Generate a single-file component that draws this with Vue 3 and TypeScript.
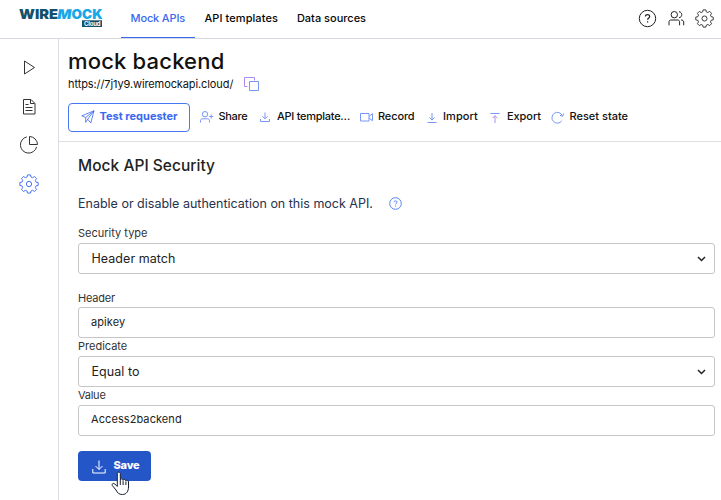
<script setup lang="ts">
import { ref } from 'vue'

interface Action {
  name: string
  label: string
  tracking: number
}

const actions: Action[] = [
  { name: 'share', label: 'Share', tracking: -0.3 },
  { name: 'template', label: 'API template…', tracking: -0.27 },
  { name: 'record', label: 'Record', tracking: -0.13 },
  { name: 'import', label: 'Import', tracking: 0.08 },
  { name: 'export', label: 'Export', tracking: -0.07 },
  { name: 'reset', label: 'Reset state', tracking: 0 },
]

const header = ref('apikey')
const value = ref('Access2backend')
const gear =
  'M8.4 1.2h3.2l.5 2.3c.7.2 1.3.4 1.8.8l2.1-1.3 2.2 2.2-1.300 2.100c.4.600.6 1.200.8 1.800l2.400.500v3.200l-2.400.500c-.2.700-.4 1.200-.8 1.800l1.300 2.100-2.200 2.200-2.100-1.300c-.6.400-1.100.6-1.800.8l-.5 2.300H8.400l-.5-2.300c-.7-.2-1.200-.4-1.800-.8L4 19.400l-2.200-2.200 1.300-2.100c-.4-.6-.6-1.100-.8-1.800l-2.400-.5V9.600l2.400-.5c.2-.6.4-1.200.8-1.800L1.800 5.200 4 3l2.100 1.300c.6-.4 1.100-.6 1.800-.8z'
</script>

<template>
  <div class="app">
    <header class="topbar">
      <svg class="logo" width="88" height="28" viewBox="0 -5 88 28">
        <text class="word dark" x="0" y="11" textLength="39" lengthAdjust="spacingAndGlyphs">WIRE</text>
        <text class="word light" x="0" y="11" textLength="14" lengthAdjust="spacingAndGlyphs" transform="translate(39.5 0) skewX(-9)">M</text>
        <text class="word light" x="52.5" y="11" textLength="31" lengthAdjust="spacingAndGlyphs">OCK</text>
        <rect x="63" y="12.3" width="20" height="6.7" fill="#12506b" />
        <text class="cloud" x="65" y="18" textLength="16.5">Cloud</text>
      </svg>
      <nav class="tabs">
        <a class="tab active">Mock APIs</a>
        <a class="tab templates">API templates</a>
        <a class="tab">Data sources</a>
      </nav>
      <div class="tools">
        <svg width="19" height="19" viewBox="0 0 19 19">
          <circle cx="9.5" cy="9.5" r="8.2" />
          <path d="M7.4 7.6c0-2.8 4.3-2.6 4.3-.1 0 1.5-2.1 1.6-2.1 3.3M9.6 12.3v1.2" stroke-width="1.2" />
        </svg>
        <svg width="17" height="17" viewBox="0 0 17 17">
          <circle cx="6.3" cy="4.7" r="3.2" />
          <path d="M1 15.3v-3.5c0-1.1.8-1.8 1.8-1.8h7c1 0 1.8.7 1.8 1.8v3.5M11 1.7c3.7.3 3.7 5.7 0 6M13 10c1.8 0 2.7.7 2.7 2v3.3" />
        </svg>
        <svg width="19" height="19" viewBox="-1 .2 22 22">
          <path :d="gear" stroke-linejoin="round" /><circle cx="10" cy="11.2" r="2.9" />
        </svg>
      </div>
    </header>

    <div class="body">
      <aside class="side">
        <svg width="20" height="20" viewBox="0 0 20 20"><path d="M5.500 3v13l10-6.500z" /></svg>
        <svg width="20" height="20" viewBox="0 0 20 20">
          <path d="M4.500 2.500h7.500l4 4v10.500H4.500zM11.500 2.500v4h4M6.500 7.500h3M6.500 10.500h7M6.500 13.500h7" />
        </svg>
        <svg width="20" height="20" viewBox="0 0 20 20">
          <path d="M7.8 1.9a8.2 8.2 0 1 0 9.8 9.9M10.500 1.500v8h8A8.200 8.200 0 0 0 10.500 1.500z" />
        </svg>
        <svg class="current" width="20" height="20" viewBox="-1 .2 22 22">
          <path :d="gear" stroke-linejoin="round" /><circle cx="10" cy="11.2" r="2.9" />
        </svg>
      </aside>

      <main class="main">
        <section class="heading">
          <h1>mock backend</h1>
          <div class="url">
            <span>https://7j1y9.wiremockapi.cloud/</span>
            <svg width="16" height="16" viewBox="0 0 16 16">
              <path d="M3.500 10.500h-3V1.500h10v3" stroke="#a98cf5" /><path d="M5.500 5.500h9v9h-9z" />
            </svg>
          </div>
          <div class="toolbar">
            <button class="requester" type="button">
              <svg width="14" height="14" viewBox="0 0 14 14">
                <path d="M.8 5.8 13 .8 9.8 13 6.700 9.200 13 .8 4.700 7.500zM4.700 7.500v4.800l2-3.100" stroke-linejoin="round" />
              </svg>
              <span>Test requester</span>
            </button>
            <div class="actions">
              <div v-for="a in actions" :key="a.name" class="action" :class="a.name">
                <svg width="14" height="14" viewBox="0 0 14 14">
                  <g v-if="a.name === 'share'">
                    <circle cx="5" cy="4.2" r="2.7" />
                    <path d="M.5 12.500v-1.800c0-1.200.7-1.900 1.900-1.900h5.200c1.200 0 1.900.7 1.900 1.900v1.800M11.200 4.500v4M9.200 6.500h4" />
                  </g>
                  <path v-else-if="a.name === 'template'" d="M5 2.500v6M2.500 6.300 5 8.800l2.500-2.500M.5 9v2.500h9V9" />
                  <path v-else-if="a.name === 'record'" d="M.5 3.500h8.500v7.500H.5zM9.200 6.300l3.300-2.600v7L9.200 8.200" />
                  <path v-else-if="a.name === 'import'" d="M5 3v7M2.500 7.500 5 10l2.500-2.500M.5 12.500h9" />
                  <g v-else-if="a.name === 'export'">
                    <path d="M.5 3.500h9" /><path d="M5 13V5.700M2.500 8.200 5 5.700l2.500 2.500" stroke="#a98cf5" />
                  </g>
                  <path v-else d="M10.800 10.800A5.400 5.400 0 1 1 11.300 5.600M9 5.300l2.700 1 1-2.800" />
                </svg>
                <span :style="{ letterSpacing: a.tracking + 'px' }">{{ a.label }}</span>
              </div>
            </div>
          </div>
        </section>

        <form class="security" @submit.prevent>
          <h2>Mock API Security</h2>
          <p class="intro">
            <span>Enable or disable authentication on this mock API.</span>
            <svg width="13" height="13" viewBox="0 0 13 13">
              <circle cx="6.5" cy="6.5" r="5.8" />
              <path d="M5.100 5.300c0-2 2.900-1.800 2.900-.1 0 1.100-1.400 1.100-1.400 2.200M6.600 8.500v1" />
            </svg>
          </p>

          <label class="type">Security type</label>
          <div class="field select">
            Header match
            <svg width="9" height="6" viewBox="0 0 9 6"><path d="M1 1l3.500 3.500L8 1" /></svg>
          </div>
          <label class="first">Header</label>
          <input v-model="header" class="field" type="text" />
          <label>Predicate</label>
          <div class="field select">
            Equal to
            <svg width="9" height="6" viewBox="0 0 9 6"><path d="M1 1l3.500 3.500L8 1" /></svg>
          </div>
          <label class="narrow">Value</label>
          <input v-model="value" class="field raised" type="text" />

          <button class="save" type="submit">
            <svg width="14" height="14" viewBox="0 0 14 14">
              <path d="M7 .5v8.800M3.500 6 7 9.500 10.500 6M.8 9v4h12.400V9" />
            </svg>
            <span>Save</span>
            <svg class="pointer" width="20" height="25" viewBox="0 0 20 25">
              <path d="M6.300 15.500V2.800c0-2.200 3-2.200 3 0v6c.3-1.400 2.600-1.200 2.800.4.5-1.200 2.600-.9 2.800.6.6-1 2.600-.6 2.600 1.200v5c0 4-2 7.500-6 7.500-3.500 0-5-1.500-6.500-4.500L1.300 14.500c-.8-1.800 1.200-2.900 2.500-1.500zM9.300 9v5M12.100 9.500v4.500M14.900 10.500V14" />
            </svg>
          </button>
        </form>
      </main>
    </div>
  </div>
</template>

<style>
body {
  margin: 0;
  background: #fff;
  overflow: hidden;
}
</style>

<style scoped>
.app {
  box-sizing: border-box;
  width: 721px;
  height: 500px;
  display: flex;
  flex-direction: column;
  overflow: hidden;
  color: #111;
  font: 400 11px/16px Inter, "Open Sans", sans-serif;
}
.app * {
  box-sizing: border-box;
}
svg {
  display: block;
  flex: none;
  fill: none;
  stroke: currentColor;
  stroke-width: 1;
}
.topbar {
  height: 39px;
  flex: none;
  display: flex;
  border-bottom: 1px solid #d8d8df;
  padding-left: 19px;
}
.logo {
  margin-top: 3px;
  stroke: none;
  overflow: visible;
}
.word {
  font: 900 13.5px Inter, sans-serif;
}
.dark {
  fill: #12506b;
}
.light {
  fill: #18a8e8;
}
.cloud {
  font: 700 6px Inter, sans-serif;
  fill: #fff;
}
.tabs {
  display: flex;
  margin-left: 14px;
  gap: 19px;
  font-weight: 500;
  line-height: 36px;
  white-space: nowrap;
}
.tab {
  height: 38px;
  color: #080808;
}
.tab.active {
  width: 74px;
  margin-right: -9.5px;
  padding-left: 9.5px;
  color: #3a68ef;
  letter-spacing: -0.15px;
  border-bottom: 1px solid #3a68ef;
}
.tab.templates {
  letter-spacing: 0.07px;
}
.tools {
  display: flex;
  align-items: center;
  gap: 10.5px;
  margin: 0 7px 2px auto;
  color: #222;
}
.body {
  flex: 1;
  display: flex;
  min-height: 0;
}
.side {
  width: 59px;
  flex: none;
  display: flex;
  flex-direction: column;
  align-items: center;
  gap: 18.5px;
  padding-top: 19px;
  border-right: 1px solid #dcdce2;
  color: #333;
}
.current {
  color: #3a68ef;
}
.main {
  flex: 1;
  min-width: 0;
}
.heading {
  height: 103px;
  padding: 8px 0 0 9px;
  border-bottom: 1px solid #dedee3;
}
h1 {
  margin: 0;
  font-size: 22px;
  line-height: 28px;
  font-weight: 500;
  letter-spacing: 0.18px;
}
.url {
  display: flex;
  align-items: center;
  height: 16px;
  gap: 11px;
  margin-top: 1px;
  letter-spacing: -0.1px;
}
.url svg {
  color: #7697f5;
}
.toolbar {
  display: flex;
  align-items: center;
  margin-top: 11px;
}
.requester {
  width: 122px;
  height: 29px;
  flex: none;
  display: flex;
  align-items: center;
  gap: 4.5px;
  padding: 0 0 2px 12px;
  border: 1px solid #4977f1;
  border-radius: 4px;
  background: #fff;
  color: #3a68ef;
  font: 700 11px/16px Inter, sans-serif;
  white-space: nowrap;
}
.requester svg {
  stroke-width: 0.8;
}
.requester span,
.action span {
  padding-bottom: 2px;
}
.actions {
  display: grid;
  grid-template-columns: 60px 100px 67px 63px 61px auto;
  margin: 0 0 2px 10px;
}
.action {
  display: flex;
  align-items: center;
  gap: 4.5px;
  white-space: nowrap;
  font-weight: 500;
}
.action svg {
  color: #7697f5;
}
.action.template {
  gap: 3px;
}
.action.record {
  gap: 4px;
}
.action.import {
  gap: 2px;
}
.action.export {
  gap: 3px;
}
.security {
  display: flex;
  flex-direction: column;
  align-items: stretch;
  padding: 14px 6px 0 19px;
}
h2 {
  margin: 0;
  font-size: 15.5px;
  line-height: 20px;
  font-weight: 500;
  letter-spacing: 0.03px;
  color: #222;
}
.intro {
  display: flex;
  align-items: center;
  gap: 16px;
  height: 20px;
  margin: 17px 0 0;
  color: #26324c;
  font-size: 12.5px;
}
.intro span {
  padding-top: 2px;
}
.intro svg {
  color: #5583f3;
}
label {
  height: 18px;
  line-height: 17px;
  color: #333;
}
.type {
  margin-top: 12px;
}
.first {
  margin-top: 15px;
  line-height: 19px;
  letter-spacing: -0.19px;
}
.narrow {
  letter-spacing: -0.25px;
}
.field {
  width: 100%;
  height: 31px;
  display: flex;
  align-items: center;
  padding: 0 12px 1px;
  border: 1px solid #c6c6c6;
  border-radius: 3px;
  background: #fff;
  color: #222;
  font: 400 11px/16px Inter, sans-serif;
  letter-spacing: 0.08px;
  outline: none;
}
.raised {
  padding-bottom: 3px;
}
.select {
  justify-content: space-between;
  padding: 0 8px 0 12.5px;
  font-size: 12.5px;
  letter-spacing: 0.05px;
}
.select svg {
  stroke-width: 1.5;
}
.save {
  position: relative;
  width: 73px;
  height: 30px;
  display: flex;
  align-items: center;
  gap: 7.5px;
  margin-top: 15px;
  padding: 0 0 0 14px;
  border: 0;
  border-radius: 4px;
  background: #2456c7;
  color: #fff;
  font: 800 11px/16px Inter, sans-serif;
  letter-spacing: -0.2px;
}
.save > svg:first-child {
  margin-top: 2px;
}
.save span {
  margin-top: -2px;
}
.pointer {
  position: absolute;
  left: 33px;
  top: 20px;
  fill: #fff;
  stroke: #172033;
}
</style>
